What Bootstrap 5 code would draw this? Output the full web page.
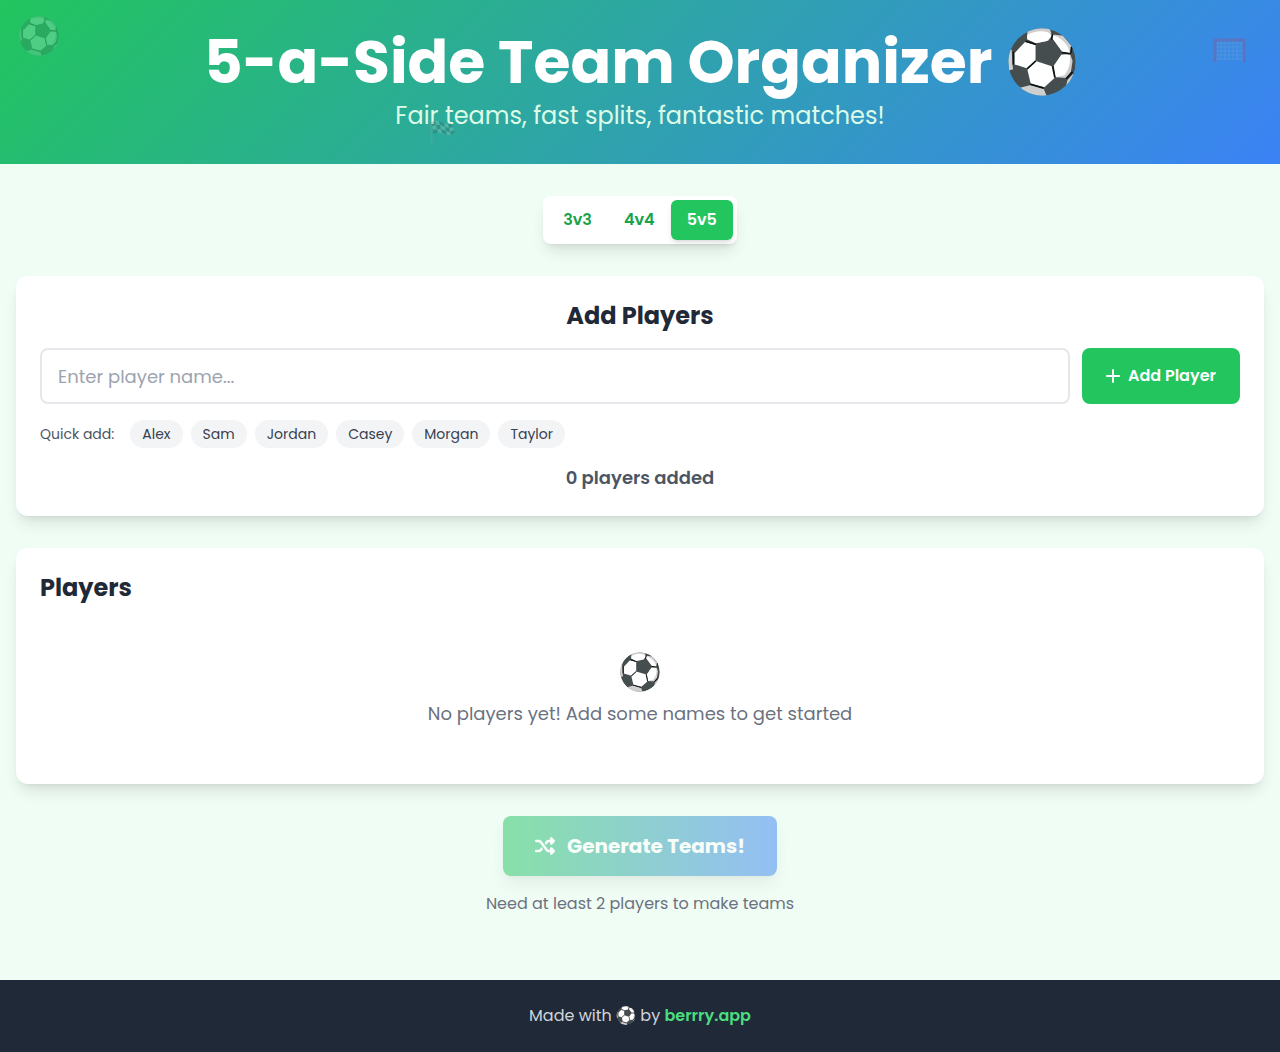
<!DOCTYPE html>
<html lang="en">
<head>
<meta charset="utf-8">
<meta name="viewport" content="width=device-width, initial-scale=1">
<title>5-a-Side Team Organizer</title>
<link href="https://cdn.jsdelivr.net/npm/bootstrap@5.3.0/dist/css/bootstrap.min.css" rel="stylesheet">
<style>
  :root { --pitch: #22c55e; --sky: #3b82f6; --ink: #1f2937; }
  body { font-family: Poppins, Inter, "Open Sans", sans-serif; background: #f0fdf4; color: var(--ink); line-height: 24px; }
  .ball { width: 1em; height: 1em; flex: none; }
  .hero { background: linear-gradient(135deg, var(--pitch), var(--sky)); padding: 32px 16px; overflow: hidden; }
  .hero h1 { font-size: 60px; line-height: 60px; font-weight: 700; gap: 16px; }
  .hero h1 .ball { width: 68px; height: 68px; margin: -4px 0; }
  .hero p { font-size: 24px; line-height: 32px; color: #dcfce7; }
  .deco { position: absolute; opacity: .2; }
  .deco-ball { left: 19px; top: 16px; width: 40px; height: 40px; }
  .deco-goal { right: 34px; top: 38px; width: 33px; height: 25px; }
  .deco-flag { left: 429px; top: 119px; width: 27px; height: 26px; }
  .raised { box-shadow: 0 10px 15px -3px rgba(0,0,0,.1), 0 4px 6px -4px rgba(0,0,0,.1); }
  .stack { gap: 32px; padding: 32px 16px; }
  .sizes { border-radius: 8px; padding: 4px; }
  .sizes button { border: 0; background: none; border-radius: 6px; padding: 8px 16px; color: #16a34a; font-weight: 600; }
  .sizes button.active { background: var(--pitch); color: #fff; box-shadow: 0 4px 6px -1px rgba(0,0,0,.1), 0 2px 4px -2px rgba(0,0,0,.1); }
  .panel { background: #fff; border-radius: 12px; padding: 24px; }
  .panel h2 { font-size: 24px; line-height: 32px; font-weight: 700; }
  .add-form { gap: 12px; }
  .name-box { height: 56px; border: 2px solid #e5e7eb; border-radius: 8px; padding: 12px 16px; font-size: 18px; line-height: 28px; }
  .name-box::placeholder { color: #9ca3af; }
  .add-btn { background: var(--pitch); color: #fff; border: 0; border-radius: 8px; padding: 0 24px; font-weight: 600; }
  .quick { font-size: 14px; line-height: 20px; color: #4b5563; }
  .chip { border: 0; border-radius: 14px; background: #f3f4f6; color: #374151; padding: 4px 12px; }
  .count { font-size: 18px; line-height: 28px; font-weight: 600; color: #4b5563; }
  .empty { padding: 32px 0; font-size: 18px; line-height: 28px; color: #6b7280; }
  .empty .ball { width: 40px; height: 40px; }
  .generate { border: 0; border-radius: 8px; gap: 12px; padding: 16px 32px; background: linear-gradient(90deg, var(--pitch), var(--sky)); color: #fff; font-size: 20px; line-height: 28px; font-weight: 700; }
  .generate:disabled { opacity: .5; color: #fff; }
  .hint { color: #6b7280; }
  .page-foot { background: var(--ink); color: #d1d5db; padding: 24px 16px; margin-top: 32px; }
  .page-foot a { color: #4ade80; font-weight: 600; text-decoration: none; }
  .page-foot .ball { width: 20px; height: 19px; vertical-align: -4px; }
</style>
<script src="https://cdn.jsdelivr.net/npm/bootstrap@5.3.0/dist/js/bootstrap.bundle.min.js" defer></script>
</head>
<body>
<svg width="0" height="0" class="position-absolute" aria-hidden="true">
  <symbol id="ball" viewBox="53 44 200 198">
    <clipPath id="disc"><circle cx="153" cy="143" r="99"/></clipPath>
    <g clip-path="url(#disc)">
      <circle cx="153" cy="143" r="99" fill="#464d4f"/>
      <g fill="#cfcfcf">
        <path d="M110 52 109 74 135 88 172 80 183 66 174 40H118Z"/>
        <path d="M186 62 184 73 212 112 238 117 240 96 215 66Z"/>
        <path d="M50 112 64 106 66 150 68 164 56 168Z"/>
        <path d="M88 219 120 211 158 222 168 246 110 246Z"/>
        <path d="M224 212 228 196 244 178 248 190Z"/>
        <path d="M188 154 210 122 236 120 243 140 238 172 224 190 193 188Z"/>
      </g>
      <g fill="#fff">
        <path d="M110 63 109 76 135 88 168 81 181 66 172 56Q140 46 110 63Z"/>
        <path d="M184 64 184 74 212 112 234 116Q232 94 208 75Q196 66 184 64Z"/>
        <path d="M72 117 103 84 134 92 134 139 110 162 72 150Z"/>
        <path d="M110 165 135 140 184 156 190 190 160 217 120 208Z"/>
        <path d="M188 154 210 122 235 120Q240 155 219 182L193 188Z"/>
      </g>
      <g fill="none" stroke="#101314" stroke-width="5">
        <path d="M105 82 135 91M184 60 181 77M211 115 237 119M69 113V150M135 140 109 163M184 155 191 189M118 208 158 220M224 192 243 172M238 117 240 98"/>
      </g>
    </g>
  </symbol>
</svg>

<header class="hero position-relative text-center text-white">
  <svg class="deco deco-ball" aria-hidden="true"><use href="#ball"/></svg>
  <svg class="deco deco-goal" viewBox="0 0 33 25" fill="none" aria-hidden="true">
    <path d="M4 5H29V21H4ZM4 9H29M4 13H29M4 17H29M8 3V21M12 3V21M16 3V21M20 3V21M24 3V21M2 3 6 7M31 3 27 7M4 21 3 24M29 21 30 24" stroke="#b0bec5" stroke-width="1"/>
    <path d="M2 24V2H31V24" stroke="#e0203c" stroke-width="3"/>
  </svg>
  <h1 class="d-flex justify-content-center align-items-center mb-2">5-a-Side Team Organizer
    <svg class="ball" role="img" aria-label="Soccer ball"><use href="#ball"/></svg>
  </h1>
  <p class="mb-0">Fair teams, fast splits, fantastic matches!</p>
  <svg class="deco deco-flag" viewBox="0 0 27 26" aria-hidden="true">
    <path d="M1 1 3 25" stroke="#9aa" stroke-width="1.5"/>
    <path d="M2 3Q7 0 12 3T22 4L26 14Q20 18 14 15T4 15Z" fill="#d5dcdc"/>
    <path d="M2 3 6 2 7 6 3 7ZM10 2 15 4 16 8 11 6ZM19 5 22 4 24 8 20 9ZM7 6 11 6 12 10 8 10ZM16 8 20 9 21 13 17 12ZM3 7 4 11 8 10 9 14 4 15ZM12 10 17 12 18 16 13 14ZM21 13 25 11 26 14 22 16Z" fill="#333b3e"/>
  </svg>
</header>

<main class="container-fluid stack d-flex flex-column">
  <div class="d-flex justify-content-center">
    <div class="sizes bg-white raised d-flex" role="group" aria-label="Team size">
      <button type="button">3v3</button>
      <button type="button">4v4</button>
      <button type="button" class="active" aria-pressed="true">5v5</button>
    </div>
  </div>

  <section class="panel raised">
    <h2 class="text-center mb-3">Add Players</h2>
    <form class="add-form d-flex mb-3">
      <input class="form-control name-box" type="text" aria-label="Player name" placeholder="Enter player name...">
      <button class="add-btn d-flex align-items-center justify-content-center gap-2 flex-shrink-0" type="button">
        <svg width="14" height="14" viewBox="0 0 14 14" fill="none" stroke="currentColor" stroke-width="2" stroke-linecap="round" aria-hidden="true"><path d="M7 1V13M1 7H13"/></svg>
        Add Player
      </button>
    </form>
    <div class="quick d-flex flex-wrap align-items-center gap-2 mb-3">
      <span class="me-2">Quick add:</span>
      <button class="chip" type="button">Alex</button>
      <button class="chip" type="button">Sam</button>
      <button class="chip" type="button">Jordan</button>
      <button class="chip" type="button">Casey</button>
      <button class="chip" type="button">Morgan</button>
      <button class="chip" type="button">Taylor</button>
    </div>
    <p class="count text-center mb-0">0 players added</p>
  </section>

  <section class="panel raised">
    <h2 class="mb-3">Players</h2>
    <div class="empty d-flex flex-column align-items-center gap-2 text-center">
      <svg class="ball" aria-hidden="true"><use href="#ball"/></svg>
      <p class="mb-0">No players yet! Add some names to get started</p>
    </div>
  </section>

  <div class="d-flex flex-column align-items-center gap-3">
    <button class="generate raised d-flex align-items-center justify-content-center" type="button" disabled>
      <svg width="20" height="20" viewBox="0 0 512 512" fill="currentColor" aria-hidden="true">
        <path d="M403.800 34.400c12-5 25.700-2.200 34.900 6.900l64 64c6 6 9.400 14.100 9.400 22.600s-3.400 16.600-9.400 22.600l-64 64c-9.200 9.200-22.900 11.900-34.900 6.900s-19.800-16.600-19.800-29.600V160H352c-10.100 0-19.600 4.700-25.600 12.800L284 229.300 244 176l31.200-41.600C293.300 110.200 321.800 96 352 96h32V64c0-12.900 7.800-24.600 19.800-29.600zM164 282.700L204 336l-31.200 41.600C154.700 401.800 126.200 416 96 416H32c-17.700 0-32-14.300-32-32s14.300-32 32-32H96c10.100 0 19.600-4.700 25.600-12.800L164 282.700zm274.600 188c-9.200 9.200-22.900 11.900-34.900 6.900s-19.800-16.600-19.800-29.600V416H352c-30.200 0-58.700-14.200-76.800-38.400L121.600 172.800c-6-8.100-15.500-12.800-25.600-12.800H32c-17.700 0-32-14.300-32-32s14.300-32 32-32H96c30.200 0 58.700 14.200 76.800 38.400L326.400 339.200c6 8.100 15.500 12.800 25.600 12.800h32V320c0-12.900 7.800-24.600 19.800-29.600s25.700-2.200 34.900 6.900l64 64c6 6 9.400 14.100 9.400 22.600s-3.400 16.600-9.400 22.600l-64 64z"/>
      </svg>
      Generate Teams!
    </button>
    <p class="hint mb-0">Need at least 2 players to make teams</p>
  </div>
</main>

<footer class="page-foot text-center">
  Made with <svg class="ball" role="img" aria-label="soccer"><use href="#ball"/></svg> by <a href="#">berrry.app</a>
</footer>
</body>
</html>
